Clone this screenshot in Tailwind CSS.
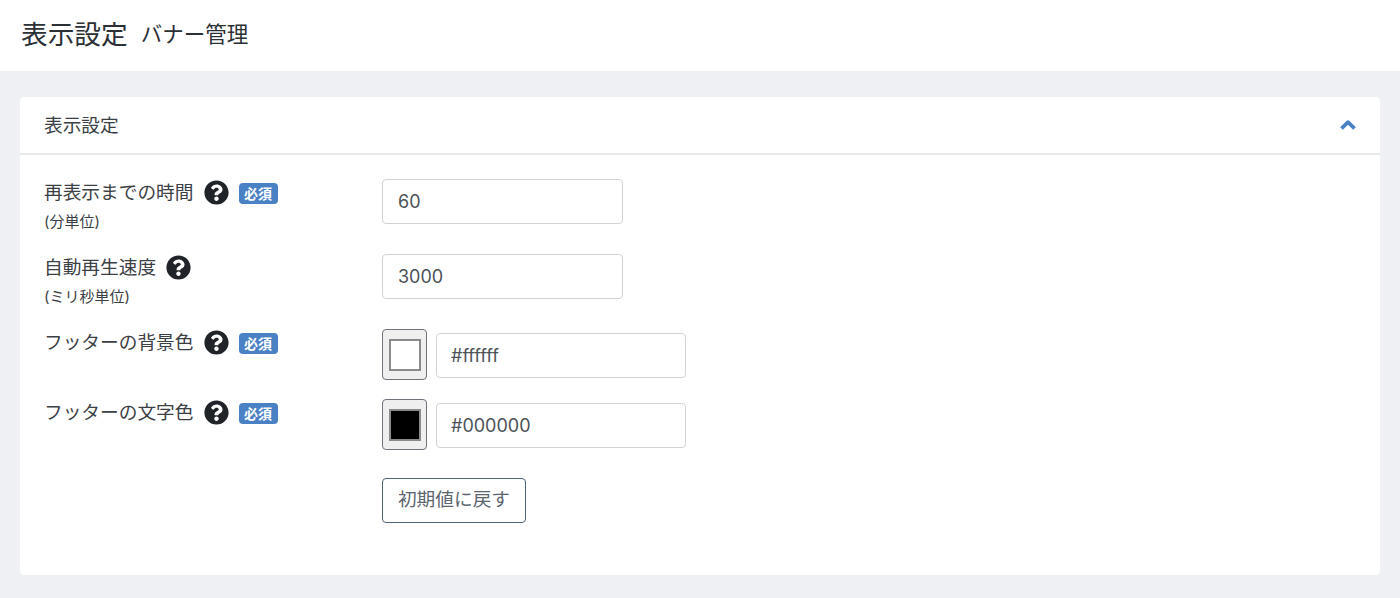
<!DOCTYPE html>
<html lang="ja">
<head>
<meta charset="utf-8">
<script src="https://cdn.jsdelivr.net/npm/@tailwindcss/browser@4"></script>
</head>
<body class="m-0 h-[598px] overflow-hidden bg-[#eef0f4] font-['Inter','Noto_Sans_CJK_JP',sans-serif] text-[#23282d]">
<header class="h-[71px] bg-white flex items-center pl-[21px] pb-[2px]">
  <h1 class="text-[26.7px] font-normal leading-none text-[#2b3035]">表示設定</h1>
  <span class="ml-[13px] text-[21.5px] leading-none text-[#2b3035]">バナー管理</span>
</header>
<main class="mx-[20px] mt-[26px] h-[478px] bg-white rounded-[4px]">
  <div class="h-[58px] border-b-2 border-[#e8e9eb] pl-[24px] pr-[23px] flex items-center justify-between">
    <span class="text-[18.7px] text-[#3b4045] leading-none pt-[2px]">表示設定</span>
    <svg class="w-[18px] h-[12px] -mt-[1px]" viewBox="0 0 18 12"><path d="M2.500 9.500 9 3.200l6.500 6.300" fill="none" stroke="#4a80c4" stroke-width="3.800" stroke-linejoin="round"/></svg>
  </div>
  <div class="pl-[24px] pt-[24px] flex flex-col">
    <div class="flex h-[45px]">
      <div class="w-[338px]">
        <div class="flex items-center h-[26px]">
          <span class="text-[18.7px] text-[#3b4045] leading-none pt-[2px]">再表示までの時間</span>
          <svg class="ml-[10px] w-[25px] h-[25px]" viewBox="0 0 512 512"><path fill="#202428" d="M504 256c0 137-111 248-248 248S8 393 8 256 119 8 256 8s248 111 248 248zM262.700 90c-54.500 0-89.300 23-116.500 63.800-3.500 5.300-2.400 12.400 2.700 16.300l34.700 26.300c5.200 3.900 12.600 3 16.700-2.100 17.900-22.700 30.100-35.800 57.300-35.800 20.400 0 45.700 13.100 45.700 32.900 0 15-12.400 22.700-32.500 34-23.500 13.200-54.600 29.600-54.600 70.600V300c0 6.600 5.400 12 12 12h56c6.600 0 12-5.400 12-12v-1.300c0-28.400 83-29.600 83-106.700 0-58.100-60.200-102-116.500-102zM256 338c-25.400 0-46 20.600-46 46 0 25.400 20.600 46 46 46s46-20.600 46-46c0-25.400-20.600-46-46-46z"/></svg>
          <span class="ml-[10px] mt-[3px] w-[39px] h-[21px] rounded-[4px] bg-[#4a80c4] text-white text-[14px] font-bold flex items-center justify-center leading-none">必須</span>
        </div>
        <div class="text-[15px] leading-none mt-[9px] text-[#3b4045]">(分単位)</div>
      </div>
      <input value="60" class="w-[241px] h-[45px] border border-[#d0d3d8] rounded-[4px] px-[15px] text-[18px] text-[#4c5258] bg-white">
    </div>
    <div class="flex h-[45px] mt-[30px]">
      <div class="w-[338px]">
        <div class="flex items-center h-[26px]">
          <span class="text-[18.7px] text-[#3b4045] leading-none pt-[2px]">自動再生速度</span>
          <svg class="ml-[10px] w-[25px] h-[25px]" viewBox="0 0 512 512"><path fill="#202428" d="M504 256c0 137-111 248-248 248S8 393 8 256 119 8 256 8s248 111 248 248zM262.700 90c-54.500 0-89.300 23-116.500 63.800-3.500 5.300-2.400 12.400 2.700 16.300l34.700 26.300c5.200 3.900 12.600 3 16.700-2.100 17.900-22.700 30.100-35.800 57.300-35.800 20.400 0 45.700 13.100 45.700 32.900 0 15-12.400 22.700-32.500 34-23.500 13.200-54.600 29.600-54.600 70.600V300c0 6.600 5.400 12 12 12h56c6.600 0 12-5.400 12-12v-1.300c0-28.400 83-29.600 83-106.700 0-58.100-60.200-102-116.500-102zM256 338c-25.400 0-46 20.600-46 46 0 25.400 20.600 46 46 46s46-20.600 46-46c0-25.400-20.600-46-46-46z"/></svg>
        </div>
        <div class="text-[15px] leading-none mt-[9px] text-[#3b4045]">(ミリ秒単位)</div>
      </div>
      <input value="3000" class="w-[241px] h-[45px] border border-[#d0d3d8] rounded-[4px] px-[15px] text-[18px] text-[#4c5258] bg-white">
    </div>
    <div class="flex h-[51px] mt-[30px]">
      <div class="w-[338px]">
        <div class="flex items-center h-[26px]">
          <span class="text-[18.7px] text-[#3b4045] leading-none pt-[2px]">フッターの背景色</span>
          <svg class="ml-[10px] w-[25px] h-[25px]" viewBox="0 0 512 512"><path fill="#202428" d="M504 256c0 137-111 248-248 248S8 393 8 256 119 8 256 8s248 111 248 248zM262.700 90c-54.500 0-89.300 23-116.500 63.800-3.500 5.300-2.400 12.400 2.700 16.300l34.700 26.300c5.200 3.900 12.600 3 16.700-2.100 17.900-22.700 30.100-35.800 57.300-35.800 20.400 0 45.700 13.100 45.700 32.900 0 15-12.400 22.700-32.500 34-23.500 13.200-54.600 29.600-54.600 70.600V300c0 6.600 5.400 12 12 12h56c6.600 0 12-5.400 12-12v-1.300c0-28.400 83-29.600 83-106.700 0-58.100-60.200-102-116.500-102zM256 338c-25.400 0-46 20.600-46 46 0 25.400 20.600 46 46 46s46-20.600 46-46c0-25.400-20.600-46-46-46z"/></svg>
          <span class="ml-[10px] mt-[3px] w-[39px] h-[21px] rounded-[4px] bg-[#4a80c4] text-white text-[14px] font-bold flex items-center justify-center leading-none">必須</span>
        </div>
      </div>
      <div class="w-[45px] h-[51px] border border-[#6f747a] rounded-[4px] bg-[#efefef] flex items-center justify-center">
        <div class="w-[32px] h-[32px] border-2 border-[#8a8a8a] bg-white"></div>
      </div>
      <input value="#ffffff" class="ml-[9px] mt-[4px] w-[250px] h-[45px] border border-[#d0d3d8] rounded-[4px] px-[14px] text-[18px] text-[#4c5258] bg-white">
    </div>
    <div class="flex h-[51px] mt-[19px]">
      <div class="w-[338px]">
        <div class="flex items-center h-[26px]">
          <span class="text-[18.7px] text-[#3b4045] leading-none pt-[2px]">フッターの文字色</span>
          <svg class="ml-[10px] w-[25px] h-[25px]" viewBox="0 0 512 512"><path fill="#202428" d="M504 256c0 137-111 248-248 248S8 393 8 256 119 8 256 8s248 111 248 248zM262.700 90c-54.500 0-89.300 23-116.500 63.800-3.500 5.300-2.400 12.400 2.700 16.300l34.700 26.300c5.200 3.900 12.600 3 16.700-2.100 17.900-22.700 30.100-35.800 57.300-35.800 20.400 0 45.700 13.100 45.700 32.900 0 15-12.400 22.700-32.500 34-23.500 13.200-54.600 29.600-54.600 70.600V300c0 6.600 5.400 12 12 12h56c6.600 0 12-5.400 12-12v-1.300c0-28.400 83-29.600 83-106.700 0-58.100-60.200-102-116.500-102zM256 338c-25.400 0-46 20.600-46 46 0 25.400 20.600 46 46 46s46-20.600 46-46c0-25.400-20.600-46-46-46z"/></svg>
          <span class="ml-[10px] mt-[3px] w-[39px] h-[21px] rounded-[4px] bg-[#4a80c4] text-white text-[14px] font-bold flex items-center justify-center leading-none">必須</span>
        </div>
      </div>
      <div class="w-[45px] h-[51px] border border-[#6f747a] rounded-[4px] bg-[#efefef] flex items-center justify-center">
        <div class="w-[32px] h-[32px] border-2 border-[#8a8a8a] bg-black"></div>
      </div>
      <input value="#000000" class="ml-[9px] mt-[4px] w-[250px] h-[45px] border border-[#d0d3d8] rounded-[4px] px-[14px] text-[18px] text-[#4c5258] bg-white">
    </div>
    <div class="mt-[28px] ml-[338px]">
      <button class="w-[144px] h-[45px] border border-[#4f6479] rounded-[4px] text-[18.7px] text-[#5b6670] bg-white leading-none">初期値に戻す</button>
    </div>
  </div>
</main>
</body>
</html>
